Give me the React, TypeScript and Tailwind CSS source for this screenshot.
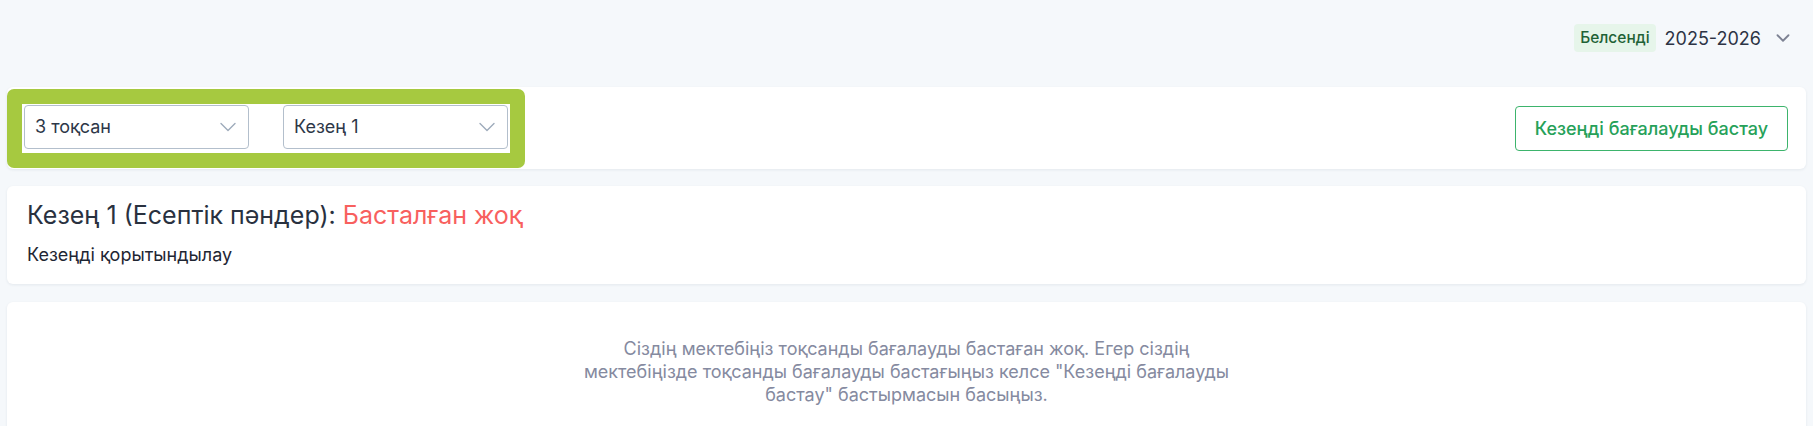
import React from 'react';
import { ChevronDown } from 'lucide-react';

function SelectBox({ label }: { label: string }) {
  return (
    <div className="w-[225px] h-[44px] flex items-center justify-between pl-[10px] pr-[6px] bg-white border border-[#b3bfcc] rounded-[4px] text-[18px] text-[#2d3748]">
      <span>{label}</span>
      <ChevronDown className="w-[28px] h-[28px] text-[#9eabbb]" strokeWidth={1.2} />
    </div>
  );
}

export default function App() {
  return (
    <div
      className="min-h-[426px] bg-[#f5f8fb] px-[7px] pb-10"
      style={{ fontFamily: 'Inter, "Noto Sans", sans-serif' }}
    >
      {/* Top bar: school year switcher */}
      <div className="flex justify-end items-center pt-[24px] pr-[12px]">
        <span className="h-[28px] px-[6px] flex items-center rounded-[4px] bg-[#e6f5ea] text-[#1f6236] text-[15.5px] font-medium">
          Белсенді
        </span>
        <span className="ml-[9px] text-[18px] text-[#2d3445]">2025-2026</span>
        <ChevronDown className="ml-[11px] w-[22px] h-[22px] text-[#7d8293]" strokeWidth={2} />
      </div>

      {/* Filters */}
      <div className="mt-[35px] h-[82px] bg-white rounded-md shadow-[0_1px_3px_rgba(30,50,80,0.08)] flex items-center justify-between pr-[18px]">
        <div className="rounded-[7px] bg-[#a6c940] p-[15px]">
          <div className="bg-white flex gap-[34px] px-[2px] pt-[1px] pb-[4px]">
            <SelectBox label="3 тоқсан" />
            <SelectBox label="Кезең 1" />
          </div>
        </div>
        <button className="h-[45px] px-[19px] border border-[#3db46c] rounded-[4px] text-[18px] text-[#26a159] font-medium bg-white">
          Кезеңді бағалауды бастау
        </button>
      </div>

      {/* Stage status */}
      <div className="mt-[17px] h-[98px] bg-white rounded-md shadow-[0_1px_3px_rgba(30,50,80,0.08)] px-[20px] pt-[14px]">
        <h2 className="text-[25px] leading-[30px] text-[#29313f]">
          Кезең 1 (Есептік пәндер): <span className="text-[#f8605e]">Басталған жоқ</span>
        </h2>
        <p className="mt-[13px] text-[18px] leading-[24px] text-[#1f2633]">Кезеңді қорытындылау</p>
      </div>

      {/* Empty state */}
      <div className="mt-[18px] h-[200px] bg-white rounded-md shadow-[0_1px_3px_rgba(30,50,80,0.08)] pt-[35px] flex justify-center">
        <p className="max-w-[660px] text-center text-[18px] leading-[23px] text-[#858aa0]">
          Сіздің мектебіңіз тоқсанды бағалауды бастаған жоқ. Егер сіздің мектебіңізде тоқсанды бағалауды
          бастағыңыз келсе "Кезеңді бағалауды бастау" бастырмасын басыңыз.
        </p>
      </div>
    </div>
  );
}
